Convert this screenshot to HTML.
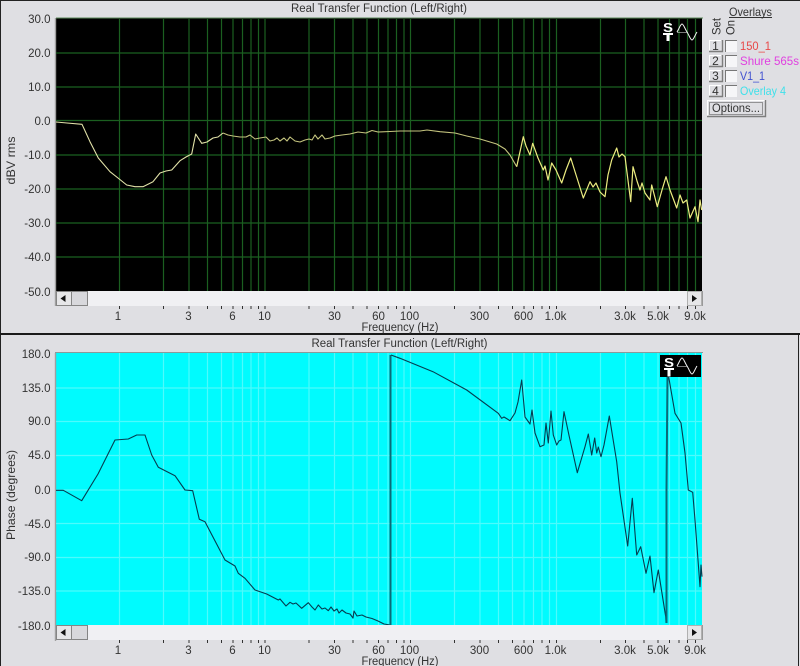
<!DOCTYPE html>
<html><head><meta charset="utf-8"><style>
html,body{margin:0;padding:0;background:#dfdfe3;width:800px;height:666px;overflow:hidden}
svg{display:block;position:absolute;left:0;top:0;filter:blur(.3px)}
text{font-family:"Liberation Sans",sans-serif;font-size:11.5px;fill:#333}
.r{text-anchor:end}.m{text-anchor:middle}.b{font-size:12px}
</style></head><body>
<svg width="800" height="666" viewBox="0 0 800 666">
<rect width="800" height="666" fill="#dfdfe3"/>
<path d="M0 .5H800M.5 0V666M798.500 335V666" stroke="#222" fill="none"/>
<rect x="0" y="333" width="800" height="2" fill="#1a1a1a"/>

<!-- TOP PLOT -->
<rect x="56" y="18" width="646" height="273" fill="#000"/>
<path d="M55.500 18V306" stroke="#a0a0a0" stroke-width="1.400" fill="none"/>
<path d="M56 18H703" stroke="#5b8a5b" fill="none"/>
<path d="M56 53H702M56 87H702M56 120.500H702M56 155H702M56 189H702M56 223H702M56 257H702" stroke="#1b5f20" stroke-width="1.300" fill="none"/>
<path d="M119.500 19V291M163.500 19V291M189 19V291M207.500 19V291M221.500 19V291M233 19V291M242.500 19V291M251 19V291M258.500 19V291M265 19V291M309 19V291M334.500 19V291M353 19V291M367 19V291M378.500 19V291M388 19V291M396.500 19V291M404 19V291M410.500 19V291M454.500 19V291M480 19V291M498.500 19V291M512.500 19V291M524 19V291M533.500 19V291M542 19V291M549.500 19V291M556.500 19V291M600.500 19V291M625.500 19V291M644 19V291M658 19V291M669.500 19V291M679 19V291M687.500 19V291M695.500 19V291" stroke="#1b5f20" stroke-width="1.200" fill="none"/>
<path d="M56 122L67 123 82 124.300 90 141.700 98.300 158 110 171.700 118 178 126.700 185 135 186.700 143 186.700 153 181.700 160 173 166 171 171.700 170 180 160.700 186 157 191.700 154 195.700 134 201.700 143.300 207 142 213 138 218 137 223 133" fill="none" stroke="#e2e2a8" stroke-width="1.100" stroke-linejoin="round"/>
<path d="M223 133L228 135 233 136 240 137 246 137 250 135 255 139 260 138 266 137 270 141 274 140 277 138 280 141 284 138 287 141 290 137 295 141 300 142 305 140 309 139 312 140 315 135 318 139 322 135 325 139 330 138 335 136 342 135 350 134 358 132 366 133 372 130.500 378 132 390 131.500 400 131 420 131 427 130 440 131.700 455 133 466.700 136 480 139 496.700 144 505 149 510 155 516.700 166.700" fill="none" stroke="#c4c47e" stroke-width="1.100" stroke-linejoin="round"/>
<path d="M516.700 166.700L523.300 136.700 526 146 530 155 532.700 143.300 538 158 543.300 170 545 166 548 180 551.700 163 556 170 561.700 183 566 170 570.700 158 577 178 583.300 198 590 181.700 593 187 596 183 600 192 605 196.700 608 175 611.700 160 616.700 148 619 157 622 154 625 156.700 630.700 201.700 633 166.700 637 181 640 190 642 183 645 193 650 200 651.700 185 657.300 206.700 662 190 666 176.700 670 190 676.700 208 680 195 683 203 686.700 200 690 218 695 206.700 698 221.700 700 200 701.700 210" fill="none" stroke="#ecec80" stroke-width="1.200" stroke-linejoin="round"/>
<!-- top icon -->
<text x="663" y="32" style="font-size:13px;font-weight:bold;fill:#fff" textLength="10" lengthAdjust="spacingAndGlyphs">S</text>
<rect x="663" y="33" width="10" height="2" fill="#fff"/><rect x="666.500" y="35" width="3" height="6" fill="#fff"/>
<path d="M677 32C679 29 680.500 24 682 24S685 29 687 32 690.500 40 692 40 695 35 697 32" fill="none" stroke="#f4f4f4" stroke-width="1"/>
<path d="M677 32.500H687" stroke="#ccc" stroke-width=".6"/>

<!-- scrollbar top -->
<rect x="56" y="291" width="646" height="15" fill="#f0f0f3"/>
<rect x="56.500" y="291.500" width="15" height="14" fill="#e6e6e8" stroke="#858585"/>
<rect x="71.500" y="291.500" width="16" height="14" fill="#d8d8dc" stroke="#858585"/>
<path d="M65.500 295V302L60.500 298.500Z" fill="#111"/>
<rect x="687.500" y="291.500" width="14" height="14" fill="#e6e6e8" stroke="#b0b0b0"/>
<path d="M692 295V302L697 298.500Z" fill="#111"/>
<path d="M702.500 291V306" stroke="#999"/>
<path d="M119.500 306V309M163.500 306V309M189 306V309M207.500 306V309M221.500 306V309M233 306V309M242.500 306V309M251 306V309M258.500 306V309M265 306V309M309 306V309M334.500 306V309M353 306V309M367 306V309M378.500 306V309M388 306V309M396.500 306V309M404 306V309M410.500 306V309M454.500 306V309M480 306V309M498.500 306V309M512.500 306V309M524 306V309M533.500 306V309M542 306V309M549.500 306V309M556.500 306V309M600.500 306V309M625.500 306V309M644 306V309M658 306V309M669.500 306V309M679 306V309M687.500 306V309M695.500 306V309" stroke="#333" fill="none"/>

<g>
<text class="m" x="379" y="12" textLength="176" lengthAdjust="spacingAndGlyphs">Real Transfer Function (Left/Right)</text>
<text class="r" x="50.500" y="23">30.0</text>
<text class="r" x="50.500" y="57">20.0</text>
<text class="r" x="50.500" y="91">10.0</text>
<text class="r" x="50.500" y="125">0.0</text>
<text class="r" x="50.500" y="159">-10.0</text>
<text class="r" x="50.500" y="193">-20.0</text>
<text class="r" x="50.500" y="227">-30.0</text>
<text class="r" x="50.500" y="261">-40.0</text>
<text class="r" x="50.500" y="296">-50.0</text>
<text class="m b" transform="translate(15 160.500) rotate(-90)" textLength="48" lengthAdjust="spacingAndGlyphs">dBV rms</text>
<text class="m" x="118" y="320">1</text>
<text class="m" x="188.500" y="320">3</text>
<text class="m" x="232.500" y="320">6</text>
<text class="m" x="264.500" y="320">10</text>
<text class="m" x="334.500" y="320">30</text>
<text class="m" x="378.500" y="320">60</text>
<text class="m" x="409.500" y="320">100</text>
<text class="m" x="479.500" y="320">300</text>
<text class="m" x="523.500" y="320">600</text>
<text class="m" x="555.500" y="320">1.0k</text>
<text class="m" x="625" y="320">3.0k</text>
<text class="m" x="658" y="320">5.0k</text>
<text class="m" x="695" y="320">9.0k</text>
<text class="m" x="400" y="331" textLength="77" lengthAdjust="spacingAndGlyphs">Frequency (Hz)</text>
</g>

<!-- overlays -->
<text class="b" x="729" y="16" textLength="43" lengthAdjust="spacingAndGlyphs">Overlays</text>
<path d="M729 17.500H772" stroke="#333"/>
<text class="b" transform="translate(720.500 35) rotate(-90)" textLength="17" lengthAdjust="spacingAndGlyphs">Set</text>
<text class="b" transform="translate(734.500 35) rotate(-90)" textLength="15" lengthAdjust="spacingAndGlyphs">On</text>
<!-- raised number buttons -->
<path d="M709.500 50.500V40.500H721M709.500 65.500V55.500H721M709.500 80.500V70.500H721M709.500 95.500V85.500H721" stroke="#fff" fill="none"/>
<path d="M709 51.500H722.500V40M709 66.500H722.500V55M709 81.500H722.500V70M709 96.500H722.500V85" stroke="#7d7d7d" stroke-width="1.400" fill="none"/>
<!-- sunken check boxes -->
<g fill="#f6f6f8"><rect x="725" y="40" width="12" height="12"/><rect x="725" y="55" width="12" height="12"/><rect x="725" y="70" width="12" height="12"/><rect x="725" y="85" width="12" height="12"/></g>
<path d="M725.500 52V40.500H737M725.500 67V55.500H737M725.500 82V70.500H737M725.500 97V85.500H737" stroke="#777" fill="none"/>
<text class="m b" x="715.500" y="50">1</text>
<text class="m b" x="715.500" y="65">2</text>
<text class="m b" x="715.500" y="80">3</text>
<text class="m b" x="715.500" y="95">4</text>
<text class="b" x="740" y="50" style="fill:#e84848" textLength="31" lengthAdjust="spacingAndGlyphs">150_1</text>
<text class="b" x="740" y="65" style="fill:#e040e0" textLength="59" lengthAdjust="spacingAndGlyphs">Shure 565s</text>
<text class="b" x="740" y="80" style="fill:#4050d0" textLength="25" lengthAdjust="spacingAndGlyphs">V1_1</text>
<text class="b" x="740" y="95" style="fill:#40e0ea" textLength="46" lengthAdjust="spacingAndGlyphs">Overlay 4</text>
<path d="M707.500 116V100.500H765" stroke="#fff" fill="none"/>
<path d="M707 116.500H765.500V100" stroke="#7d7d7d" stroke-width="1.400" fill="none"/>
<rect x="709.500" y="102.500" width="53" height="12" fill="none" stroke="#444" stroke-dasharray="1 1"/>
<text class="b" x="712" y="112" textLength="48" lengthAdjust="spacingAndGlyphs">Options...</text>

<!-- BOTTOM PLOT -->
<rect x="56" y="353" width="646" height="272" fill="#00fbfe"/>
<path d="M55.500 353V641" stroke="#a0a0a0" stroke-width="1.400" fill="none"/>
<path d="M55 352.500H703" stroke="#8a9a9a" fill="none"/>
<path d="M56 388H702M56 421.500H702M56 455.500H702M56 490H702M56 523.500H702M56 557.500H702M56 591H702" stroke="#4dfafc" stroke-width="1.200" fill="none"/>
<path d="M119.500 353V625M163.500 353V625M189 353V625M207.500 353V625M221.500 353V625M233 353V625M242.500 353V625M251 353V625M258.500 353V625M265 353V625M309 353V625M334.500 353V625M353 353V625M367 353V625M378.500 353V625M388 353V625M396.500 353V625M404 353V625M410.500 353V625M454.500 353V625M480 353V625M498.500 353V625M512.500 353V625M524 353V625M533.500 353V625M542 353V625M549.500 353V625M556.500 353V625M600.500 353V625M625.500 353V625M644 353V625M658 353V625M669.500 353V625M679 353V625M687.500 353V625M695.500 353V625" stroke="#4dfafc" stroke-width="1.200" fill="none"/>
<path d="M56 490.300L63.300 490.300 81.700 500.700 98 474 115 440 128.300 439 136.700 435 145 435 151.700 455 158.300 467.300 175 475.700 185 490 192.700 490.700 199.300 519.300 205 521.700 225 560 235 566 238.300 573.300 245 578.300 255 590 266.700 594 278.300 600 280 599 286 606 290 602.300 293 604 296 603 301.700 608.300 308.300 602.700 312 607 315 610 318.300 605 322 609 325 608 328.300 610.700 331 607 334 611 337 609 339 613 342 610 346 613 350 614 353 618 354 611 357 616 362 615 366 617 372 618.500 378 621 384 624 390 625" fill="none" stroke="#053c50" stroke-width="1.100" stroke-linejoin="round"/>
<path d="M390.500 625.500V355" stroke="#0a6a78" stroke-width="2" fill="none"/>
<path d="M391 355L400 358.300 433 371.700 466.700 390 498.300 413.300 501.700 418.300 504 417 510 420.700 515 413 518 402 521.700 380 525 417 530 424 532 410 535 433 540 446.700 544 445 546 423 548.300 443 551 411 553.300 435 556.700 445 559 441 561 440 564 411.700 569.300 436.700 577.300 472.700 585 446.700 588.300 434 591.700 455 594.700 438 596.700 453 598.300 447 601 456.700 604 445 609.300 416 616.700 461.700 620 493 627.700 546 632.300 498.300 636.700 555 640.700 546.700 646 573.300 650 556 654 592.700 658.300 570 665.700 616.700 666 623" fill="none" stroke="#053c50" stroke-width="1.100" stroke-linejoin="round"/>
<path d="M666.500 623V490L667.500 375" stroke="#0a6a78" stroke-width="2" fill="none"/>
<path d="M668 373L675 413.300 681 423 685 453 688.300 490 692.700 492.300 695 520 700 586.700 701 565 702 576.700" fill="none" stroke="#053c50" stroke-width="1.100" stroke-linejoin="round"/>
<!-- bottom icon -->
<rect x="660" y="355" width="41" height="22" fill="#000"/>
<text x="664" y="367" style="font-size:13px;font-weight:bold;fill:#fff" textLength="10" lengthAdjust="spacingAndGlyphs">S</text>
<rect x="664" y="368" width="10" height="2" fill="#fff"/><rect x="667.500" y="370" width="3" height="6.500" fill="#fff"/>
<path d="M677 366C679 363 680.500 358 682 358S685 363 687 366 690.500 374 692 374 695 369 697 366" fill="none" stroke="#f4f4f4" stroke-width="1"/>
<path d="M677 366.500H687" stroke="#ccc" stroke-width=".6"/>

<!-- scrollbar bottom -->
<rect x="56" y="625" width="646" height="15" fill="#f0f0f3"/>
<rect x="56.500" y="625.500" width="15" height="14" fill="#e6e6e8" stroke="#858585"/>
<rect x="71.500" y="625.500" width="16" height="14" fill="#d8d8dc" stroke="#858585"/>
<path d="M65.500 629V636L60.500 632.500Z" fill="#111"/>
<rect x="687.500" y="625.500" width="14" height="14" fill="#e6e6e8" stroke="#b0b0b0"/>
<path d="M692 629V636L697 632.500Z" fill="#111"/>
<path d="M702.500 625V640" stroke="#999"/>
<path d="M119.500 640V643M163.500 640V643M189 640V643M207.500 640V643M221.500 640V643M233 640V643M242.500 640V643M251 640V643M258.500 640V643M265 640V643M309 640V643M334.500 640V643M353 640V643M367 640V643M378.500 640V643M388 640V643M396.500 640V643M404 640V643M410.500 640V643M454.500 640V643M480 640V643M498.500 640V643M512.500 640V643M524 640V643M533.500 640V643M542 640V643M549.500 640V643M556.500 640V643M600.500 640V643M625.500 640V643M644 640V643M658 640V643M669.500 640V643M679 640V643M687.500 640V643M695.500 640V643" stroke="#333" fill="none"/>

<g>
<text class="m" x="399.500" y="347" textLength="176" lengthAdjust="spacingAndGlyphs">Real Transfer Function (Left/Right)</text>
<text class="r" x="50.500" y="358">180.0</text>
<text class="r" x="50.500" y="392">135.0</text>
<text class="r" x="50.500" y="425">90.0</text>
<text class="r" x="50.500" y="459">45.0</text>
<text class="r" x="50.500" y="494">0.0</text>
<text class="r" x="50.500" y="528">-45.0</text>
<text class="r" x="50.500" y="561">-90.0</text>
<text class="r" x="50.500" y="595">-135.0</text>
<text class="r" x="50.500" y="630">-180.0</text>
<text class="m b" transform="translate(15 495) rotate(-90)" textLength="90" lengthAdjust="spacingAndGlyphs">Phase (degrees)</text>
<text class="m" x="118" y="654">1</text>
<text class="m" x="188.500" y="654">3</text>
<text class="m" x="232.500" y="654">6</text>
<text class="m" x="264.500" y="654">10</text>
<text class="m" x="334.500" y="654">30</text>
<text class="m" x="378.500" y="654">60</text>
<text class="m" x="409.500" y="654">100</text>
<text class="m" x="479.500" y="654">300</text>
<text class="m" x="523.500" y="654">600</text>
<text class="m" x="555.500" y="654">1.0k</text>
<text class="m" x="625" y="654">3.0k</text>
<text class="m" x="658" y="654">5.0k</text>
<text class="m" x="695" y="654">9.0k</text>
<text class="m" x="400" y="665" textLength="77" lengthAdjust="spacingAndGlyphs">Frequency (Hz)</text>
</g>
</svg>
</body></html>
